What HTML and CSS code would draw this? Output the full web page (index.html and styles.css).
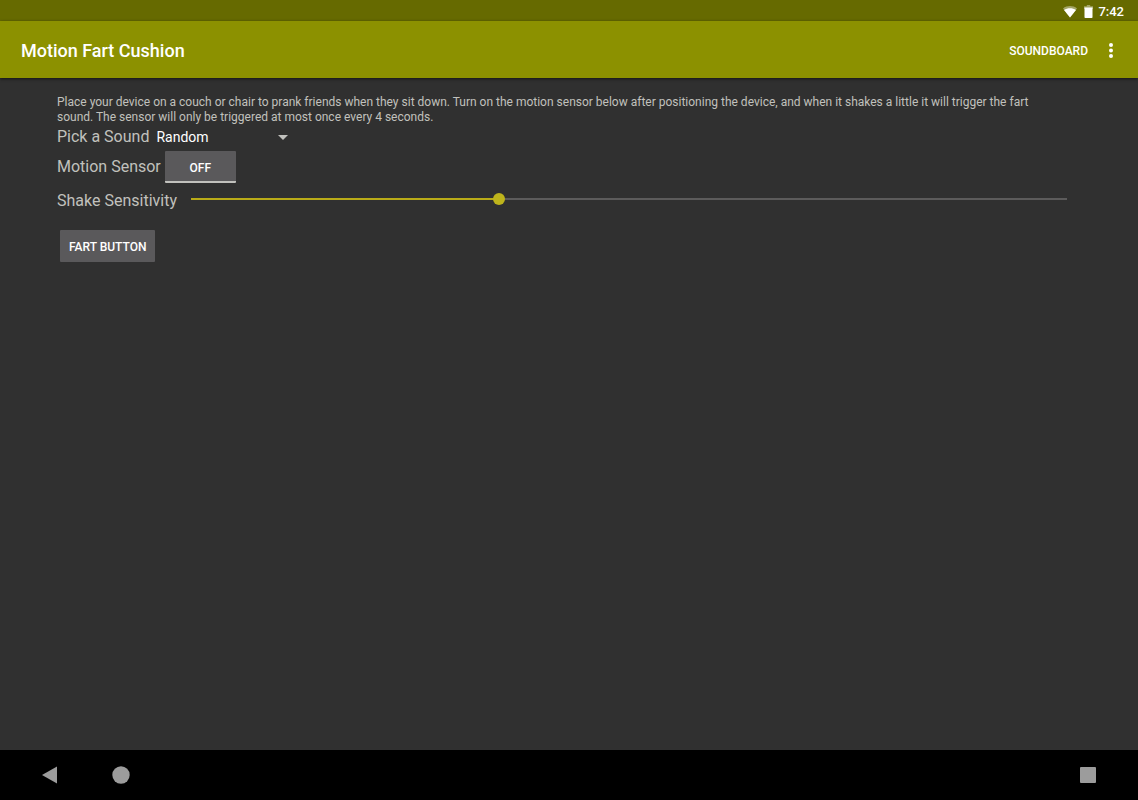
FILE: index.html
```html
<!DOCTYPE html>
<html lang="en">
<head>
    <meta charset="UTF-8">
    <meta name="viewport" content="width=device-width, initial-scale=1.0">
    <title>Motion Fart Cushion</title>
    <link rel="stylesheet" href="styles.css">
</head>
<body>
    <div class="status-bar">
        <svg class="wifi" width="14" height="13" viewBox="0 0 14 13">
            <path d="M0 3.4C4 .2 10 .2 14 3.4L7 12.5z" fill="#fff" opacity=".4"/>
            <path d="M1 4.9C4.4 2.8 9.6 2.8 13 4.9L7 12.5z" fill="#fff"/>
        </svg>
        <svg class="battery" width="9" height="13" viewBox="0 0 9 13">
            <path d="M2.8 0h3.4v1.3H9V4H0V1.3h2.8z" fill="#fff" opacity=".4"/>
            <path d="M.5 2.5h8v9.7a.8.8 0 0 1-.8.8H1.3a.8.8 0 0 1-.8-.8z" fill="#fff"/>
        </svg>
        <span class="clock">7:42</span>
    </div>

    <header class="app-bar">
        <h1>Motion Fart Cushion</h1>
        <button class="action" type="button">SOUNDBOARD</button>
        <button class="overflow" type="button" aria-label="More options">
            <svg width="4" height="16" viewBox="0 0 4 16" fill="#fff">
                <circle cx="2" cy="2" r="2"/>
                <circle cx="2" cy="7.5" r="2"/>
                <circle cx="2" cy="13" r="2"/>
            </svg>
        </button>
    </header>

    <main>
        <p class="intro">Place your device on a couch or chair to prank friends when they sit down. Turn on the motion sensor below after positioning the device, and when it shakes a little it will trigger the fart sound. The sensor will only be triggered at most once every 4 seconds.</p>

        <div class="row pick">
            <label for="sound">Pick a Sound</label>
            <div class="spinner">
                <select id="sound">
                    <option>Random</option>
                </select>
                <svg class="arrow" width="10" height="5" viewBox="0 0 10 5"><path d="M0 0h10L5 5z" fill="#c1c1bd"/></svg>
            </div>
        </div>

        <div class="row motion">
            <label for="motion">Motion Sensor</label>
            <button class="btn toggle" id="motion" type="button" aria-pressed="false">OFF</button>
        </div>

        <div class="row shake">
            <label for="sensitivity">Shake Sensitivity</label>
            <input id="sensitivity" type="range" min="0" max="100" value="35">
        </div>

        <button class="btn fart" type="button">FART BUTTON</button>
    </main>

    <nav class="nav-bar">
        <button type="button" aria-label="Back">
            <svg width="18" height="18" viewBox="0 0 18 18"><path d="M1 9L16 .5v17z" fill="#9c9c9c"/></svg>
        </button>
        <button type="button" aria-label="Home">
            <svg width="18" height="18" viewBox="0 0 18 18"><circle cx="9" cy="9" r="8.7" fill="#9c9c9c"/></svg>
        </button>
        <button class="recent" type="button" aria-label="Recent apps">
            <svg width="18" height="18" viewBox="0 0 18 18"><rect x="1" y="1" width="16" height="16" rx="1" fill="#9c9c9c"/></svg>
        </button>
    </nav>

    <script>
        const motion = document.getElementById("motion");
        const slider = document.getElementById("sensitivity");

        motion.onclick = () => {
            const on = motion.getAttribute("aria-pressed") !== "true";
            motion.setAttribute("aria-pressed", on);
            motion.textContent = on ? "ON" : "OFF";
        };

        function paintSlider() {
            slider.style.setProperty("--fill", slider.value + "%");
        }

        slider.oninput = paintSlider;
        paintSlider();
    </script>
</body>
</html>
```
FILE: styles.css
```css
* {
    box-sizing: border-box;
}
body {
    margin: 0;
    min-height: 100vh;
    display: flex;
    flex-direction: column;
    background: #303030;
    color: #c1c1bd;
    font-family: Roboto, sans-serif;
    font-size: 16px;
}
button, select {
    font-family: inherit;
    color: #fff;
    border: none;
    background: none;
    padding: 0;
    cursor: pointer;
}
svg {
    display: block;
}
.status-bar {
    display: flex;
    align-items: center;
    justify-content: flex-end;
    height: 21px;
    padding: 2px 14px 0;
    background: #666a00;
}
.battery {
    margin-left: 7px;
}
.clock {
    margin-left: 5px;
    color: #fff;
    font-size: 13px;
    font-weight: 500;
}
.app-bar {
    display: flex;
    align-items: center;
    height: 57px;
    padding: 2px 25px 0 21px;
    background: #8c9100;
    box-shadow: 0 1px 3px rgba(0, 0, 0, 0.6);
}
h1 {
    flex: 1;
    margin: 0;
    color: #fff;
    font-size: 18px;
    font-weight: 500;
}
.action {
    font-size: 12px;
    font-weight: 500;
}
.overflow {
    margin-left: 21px;
}
main {
    flex: 1;
    padding: 17px 57px;
}
.intro {
    margin: 0;
    padding-right: 24px;
    font-size: 12px;
    line-height: 15px;
}
.row {
    display: flex;
    align-items: center;
}
.pick {
    height: 23px;
    gap: 7px;
}
.spinner {
    position: relative;
    width: 138px;
}
.spinner select {
    appearance: none;
    width: 100%;
    font-size: 14px;
}
.spinner option {
    background: #424242;
}
.arrow {
    position: absolute;
    right: 6px;
    top: 50%;
    margin-top: -2px;
    pointer-events: none;
}
.motion {
    height: 38px;
    gap: 4px;
}
.motion label {
    padding-bottom: 2px;
}
.btn {
    height: 32px;
    padding: 2px 9px 0;
    background: #5a595b;
    font-size: 12px;
    font-weight: 500;
    border-radius: 1px;
}
.toggle {
    width: 71px;
    padding-top: 3px;
    border-bottom: 2px solid #c1c1bd;
}
.toggle[aria-pressed="true"] {
    border-bottom-color: #beb41c;
}
.shake {
    height: 28px;
    gap: 14px;
    padding-right: 14px;
}
.shake input {
    appearance: none;
    flex: 1;
    min-width: 0;
    height: 12px;
    margin: 0 0 2px;
    background: linear-gradient(to right, #b9ab18 var(--fill), #5c5b5b var(--fill)) center / 100% 2px no-repeat;
}
.shake input::-webkit-slider-thumb {
    appearance: none;
    width: 12px;
    height: 12px;
    border-radius: 50%;
    background: #beb41c;
}
.fart {
    margin: 16px 3px 0;
}
.nav-bar {
    display: flex;
    align-items: center;
    gap: 53px;
    height: 50px;
    padding: 0 41px;
    background: #000;
}
.recent {
    margin-left: auto;
}
```
